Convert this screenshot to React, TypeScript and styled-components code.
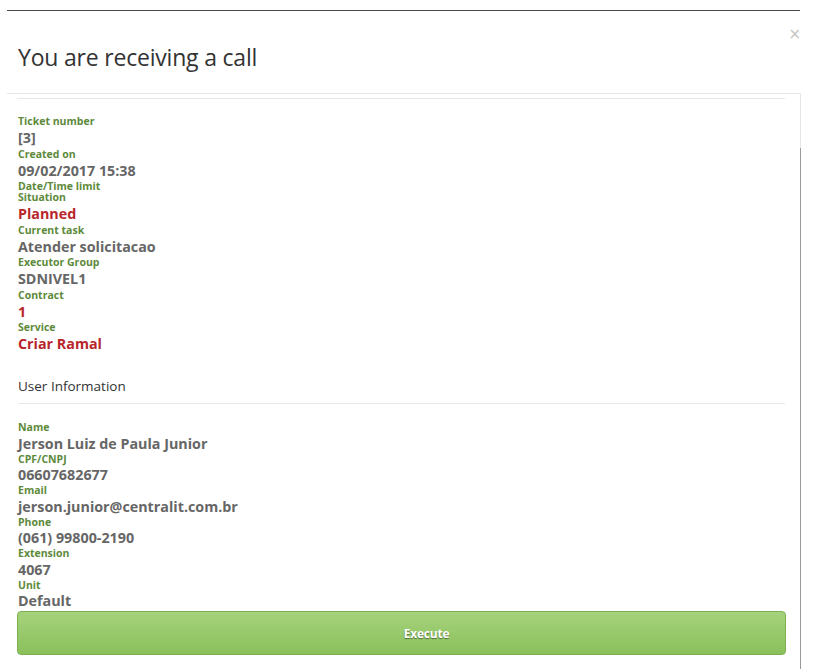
import React from "react";
import styled, { createGlobalStyle } from "styled-components";

const Global = createGlobalStyle`
  html, body { margin: 0; padding: 0; background: #fff; }
  body { font-family: "Open Sans", "Liberation Sans", sans-serif; }
  *, *::before, *::after { box-sizing: border-box; }
`;

const Page = styled.div`
  width: 823px;
  height: 669px;
  overflow: hidden;
  position: relative;
  background: #fff;
`;

const TopRule = styled.div`
  margin: 10px 0 0 7px;
  width: 793px;
  height: 1px;
  background: #4a4a4a;
`;

const Header = styled.div`
  position: relative;
  padding: 31px 0 0 18px;
  height: 82px;
`;

const Title = styled.h1`
  margin: 0;
  font-family: "Open Sans", "Liberation Sans", sans-serif;
  font-weight: 400;
  font-size: 23px;
  line-height: 30px;
  color: #333;
  letter-spacing: -0.2px;
`;

const Close = styled.span`
  position: absolute;
  right: 22px;
  top: 14px;
  font-size: 15px;
  color: #c4c4c4;
  font-family: "DejaVu Sans", sans-serif;
`;

const Panel = styled.div`
  position: relative;
  margin-left: 7px;
  width: 794px;
  border-top: 1px solid #e6e6e6;
  border-right: 1px solid #e6e6e6;
  padding: 4px 0 0 10px;
  height: 600px;
  &::after {
    content: "";
    position: absolute;
    right: -1px;
    top: 54px;
    bottom: 0;
    width: 1px;
    background: #9a9a9a;
  }
`;

const Rule = styled.div`
  width: 768px;
  height: 1px;
  background: #e8e8e8;
`;

const Fields = styled.div<{ $top: number }>`
  display: flex;
  flex-direction: column;
  padding-left: 1px;
  margin-top: ${(p) => p.$top}px;
`;

const Label = styled.div<{ $dense?: boolean }>`
  font-size: 10.5px;
  line-height: ${(p) => (p.$dense ? 10.5 : 11)}px;
  font-weight: 700;
  color: #5d8a3a;
`;

const Value = styled.div<{ $red?: boolean; $dense?: boolean }>`
  font-size: 14.3px;
  line-height: ${(p) => (p.$dense ? 21 : 21.5)}px;
  font-weight: 700;
  color: ${(p) => (p.$red ? "#b8262b" : "#666")};
`;

const Section = styled.div`
  margin: 21.5px 0 0 1px;
  font-size: 13.5px;
  line-height: 20px;
  color: #333;
  padding-bottom: 7px;
  width: 767px;
  border-bottom: 1px solid #e8e8e8;
`;

const Button = styled.button`
  display: block;
  margin: 0;
  width: 769px;
  height: 44px;
  padding: 0 0 0 50px;
  border: 1px solid #7cb04e;
  border-radius: 4px;
  background: linear-gradient(#a5d27c, #8bc05b);
  color: #fff;
  font-family: "Open Sans", "Liberation Sans", sans-serif;
  font-weight: 700;
  font-size: 12px;
  letter-spacing: -0.2px;
  text-shadow: 0 1px 1px rgba(0, 0, 0, 0.45);
  cursor: pointer;
`;

type F = { label: string; value?: string; red?: boolean };

const ticket: F[] = [
  { label: "Ticket number", value: "[3]" },
  { label: "Created on", value: "09/02/2017 15:38" },
  { label: "Date/Time limit" },
  { label: "Situation", value: "Planned", red: true },
  { label: "Current task", value: "Atender solicitacao" },
  { label: "Executor Group", value: "SDNIVEL1" },
  { label: "Contract", value: "1", red: true },
  { label: "Service", value: "Criar Ramal", red: true },
];

const user: F[] = [
  { label: "Name", value: "Jerson Luiz de Paula Junior" },
  { label: "CPF/CNPJ", value: "06607682677" },
  { label: "Email", value: "jerson.junior@centralit.com.br" },
  { label: "Phone", value: "(061) 99800-2190" },
  { label: "Extension", value: "4067" },
  { label: "Unit", value: "Default" },
];

const FieldList = ({ items, dense }: { items: F[]; dense?: boolean }) => (
  <>
    {items.map((f) => (
      <React.Fragment key={f.label}>
        <Label $dense={dense}>{f.label}</Label>
        {f.value !== undefined && (
          <Value $red={f.red} $dense={dense}>
            {f.value}
          </Value>
        )}
      </React.Fragment>
    ))}
  </>
);

export default function App() {
  return (
    <>
      <Global />
      <Page>
        <TopRule />
        <Header>
          <Title>You are receiving a call</Title>
          <Close>×</Close>
        </Header>
        <Panel>
          <Rule />
          <Fields $top={17}>
            <FieldList items={ticket} />
          </Fields>
          <Section>User Information</Section>
          <Fields $top={18}>
            <FieldList items={user} dense />
          </Fields>
          <Button>Execute</Button>
        </Panel>
      </Page>
    </>
  );
}
